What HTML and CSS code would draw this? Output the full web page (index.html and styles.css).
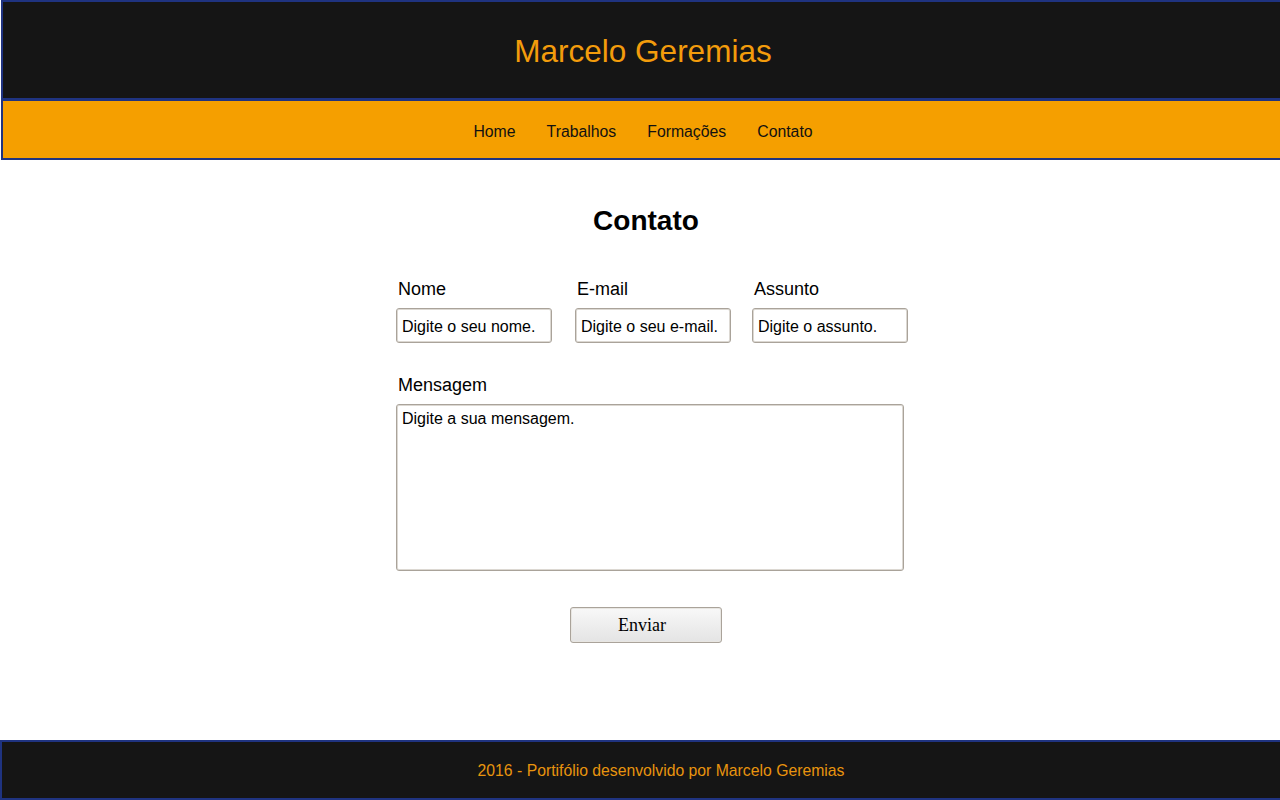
FILE: index.html
```html
<!DOCTYPE html>
<html lang="pt-BR">
<head>
<meta charset="utf-8">
<title>Marcelo Geremias - Contato</title>
<link rel="stylesheet" href="styles.css">
</head>
<body>
<div class="page">
  <header class="site-header">
    <h1 class="site-title">Marcelo Geremias</h1>
  </header>
  <nav class="site-nav">
    <a href="#">Home</a>
    <a href="#">Trabalhos</a>
    <a href="#">Formações</a>
    <a href="#">Contato</a>
  </nav>
  <main class="main">
    <section class="contact">
      <h2 class="contact-title">Contato</h2>
      <form class="form">
        <div class="row">
          <div class="field">
            <label class="label">Nome</label>
            <input class="input" type="text" value="Digite o seu nome.">
          </div>
          <div class="field field-mid">
            <label class="label">E-mail</label>
            <input class="input" type="text" value="Digite o seu e-mail.">
          </div>
          <div class="field">
            <label class="label">Assunto</label>
            <input class="input" type="text" value="Digite o assunto.">
          </div>
        </div>
        <div class="field message">
          <label class="label label-message">Mensagem</label>
          <textarea class="textarea">Digite a sua mensagem.</textarea>
        </div>
        <div class="actions">
          <button class="button" type="button">Enviar</button>
        </div>
      </form>
    </section>
  </main>
  <footer class="site-footer">
    <p class="footer-text">2016 - Portifólio desenvolvido por Marcelo Geremias</p>
  </footer>
</div>
</body>
</html>
```

FILE: styles.css
```css
* { box-sizing: border-box; }

html, body {
  margin: 0;
  padding: 0;
  background: #ffffff;
  overflow-x: hidden;
}

body {
  font-family: "Liberation Sans", Arial, sans-serif;
  color: #000;
}

.page {
  min-height: 100vh;
  display: flex;
  flex-direction: column;
}

.site-header {
  width: calc(100% + 4px);
  margin-left: 1px;
  height: 100px;
  background: #151515;
  border: 2px solid #1f3380;
  display: flex;
  align-items: center;
  justify-content: center;
}

.site-title {
  margin: 0;
  padding-top: 2px;
  font-weight: normal;
  font-size: 31.5px;
  color: #f39c0c;
}

.site-nav {
  width: calc(100% + 4px);
  margin-left: 1px;
  height: 60px;
  padding-top: 4px;
  background: #f59f00;
  border: 2px solid #1f3380;
  border-top-width: 1px;
  display: flex;
  align-items: center;
  justify-content: center;
  gap: 31px;
}

.site-nav a {
  color: #111;
  text-decoration: none;
  font-size: 15.8px;
}

.main {
  flex: 1;
}

.contact {
  width: 536px;
  margin: 0 auto;
  padding-left: 24px;
}

.contact-title {
  margin: 45px 0 0;
  padding-right: 12px;
  text-align: center;
  font-size: 28px;
  font-weight: bold;
  line-height: 32px;
}

.form {
  margin-top: 42px;
}

.row {
  display: flex;
  gap: 22px;
}

.field {
  display: flex;
  flex-direction: column;
}

.field-mid {
  margin-left: 1px;
  margin-right: -1px;
}

.label {
  font-size: 18px;
  padding-left: 2px;
  line-height: 20px;
  margin-bottom: 9px;
}

.label-message {
  margin-bottom: 9px;
}

.input {
  width: 156px;
  height: 35px;
  padding: 2px 5px 0;
  font-family: "Liberation Sans", Arial, sans-serif;
  font-size: 16px;
  color: #000;
  background: #fff;
  border: 1px solid #aaa39a;
  box-shadow: inset 0 0 0 1px #dcd8d2;
  border-radius: 3px;
}

.message {
  margin-top: 32px;
}

.textarea {
  width: 508px;
  height: 167px;
  padding: 5px 5px;
  resize: none;
  font-family: "Liberation Sans", Arial, sans-serif;
  font-size: 16px;
  line-height: 18px;
  color: #000;
  border: 1px solid #aaa39a;
  box-shadow: inset 0 0 0 1px #dcd8d2;
  border-radius: 3px;
}

.actions {
  display: flex;
  justify-content: center;
  margin-top: 36px;
  padding-right: 12px;
}

.button {
  width: 152px;
  height: 36px;
  padding: 0 8px 0 0;
  font-family: "Liberation Serif", "Times New Roman", serif;
  font-size: 18px;
  color: #000;
  background: linear-gradient(#f8f8f8, #e4e4e4);
  border: 1px solid #aaa39a;
  box-shadow: inset 0 0 0 1px #e8e6e2;
  border-radius: 3px;
}

.site-footer {
  width: calc(100% + 4px);
  height: 60px;
  background: #151515;
  border: 2px solid #1f3380;
  display: flex;
  align-items: center;
  justify-content: center;
  padding-left: 38px;
}

.footer-text {
  margin: 0;
  padding-top: 2px;
  font-size: 15.75px;
  color: #e8940e;
}
```
